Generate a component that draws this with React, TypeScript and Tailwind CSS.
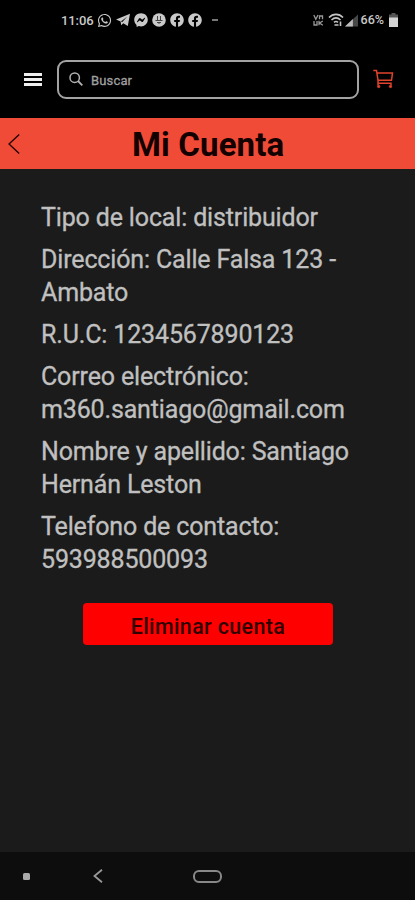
import React from "react";
import { FaWhatsapp, FaFacebookMessenger, FaFacebook } from "react-icons/fa";

const details: string[][] = [
  ["Tipo de local: distribuidor"],
  ["Dirección: Calle Falsa 123 -", "Ambato"],
  ["R.U.C: 1234567890123"],
  ["Correo electrónico:", "m360.santiago@gmail.com"],
  ["Nombre y apellido: Santiago", "Hernán Leston"],
  ["Telefono de contacto:", "593988500093"],
];

function StatusBar() {
  return (
    <div className="flex h-10 items-center pl-[61px] pr-[17px] text-[#c9c9c9]">
      <span className="w-[36px] whitespace-nowrap text-[13px] font-medium leading-none tracking-[-0.1px]">11:06</span>
      <div className="flex items-center gap-[4px]">
        <FaWhatsapp size={15} />
        <svg width="14" height="14" viewBox="0 0 14 14" fill="#c9c9c9">
          <path d="M0 6.600L14 .8 11.800 13 7.300 10.200 5.200 12.200 4.600 8.600z" />
          <path d="M4.800 8.400L11 3.800 6.300 9.300z" fill="#222" />
        </svg>
        <FaFacebookMessenger size={14} />
        <svg width="14" height="14" viewBox="0 0 14 14">
          <circle cx="7" cy="7" r="6.8" fill="#c9c9c9" />
          <path d="M5.500 3v4M8.500 3v4M3.500 7.500h7M5 9.500h4M7 9v2" stroke="#444" strokeWidth="1" />
        </svg>
        <FaFacebook size={14} />
        <FaFacebook size={14} />
      </div>
      <span className="ml-[10px] h-[1.5px] w-[6px] bg-[#777]" />
      <div className="ml-auto flex items-center">
        <svg width="11" height="12" viewBox="0 0 11 12" fill="none" stroke="#999" strokeWidth="1.3">
          <path d="M.8 1l2 4.200L5 1M6.500 5.200V2h3v3.200M1 7v4h3V7M6 6.800v4.500M9.800 7L6.600 9l3.200 2.200" />
        </svg>
        <svg className="ml-[4px]" width="16" height="14" viewBox="0 0 16 14" fill="none" stroke="#c4c4c4" strokeWidth="1.6">
          <path d="M1 4.500C5 .3 11 .3 15 4.500M3.500 7c2.700-2.500 6.300-2.500 9 0M6 9.300c1.300-1 2.700-1 4 0" />
          <path d="M6.500 12h4M12.500 8.500v4.500" />
        </svg>
        <svg className="ml-[1px]" width="13" height="13" viewBox="0 0 14 13">
          <path d="M0 13L14 0v13z" fill="#484848" />
          <path d="M0 13L8.500 5v8z" fill="#bbb" />
        </svg>
        <span className="ml-[3px] mt-[1px] whitespace-nowrap text-[12.5px] font-medium leading-none">66%</span>
        <svg className="ml-[5px]" width="9" height="14" viewBox="0 0 9 14">
          <path d="M2.500 0h4v1.500H9V5H0V1.500h2.500z" fill="#555" />
          <path d="M0 4.500h9V14H0z" fill="#d4d4d4" />
        </svg>
      </div>
    </div>
  );
}

function SearchHeader() {
  return (
    <div className="flex h-[78px] items-center pl-[24px]">
      <div className="mt-[1px] flex w-[18px] flex-col gap-[2px]">
        <span className="h-[3px] bg-[#eee]" />
        <span className="h-[3px] bg-[#eee]" />
        <span className="h-[3px] bg-[#eee]" />
      </div>
      <div className="ml-[15px] flex h-[39px] w-[302px] items-center rounded-[9px] border-2 border-[#a3a3a3] pl-[10px]">
        <svg width="14" height="14" viewBox="0 0 14 14" fill="none" stroke="#b0b0b0" strokeWidth="1.5">
          <circle cx="5.700" cy="5.700" r="4.700" />
          <path d="M9 9l4.300 4.300" strokeWidth="1.8" />
        </svg>
        <span className="ml-[8px] mt-[2px] text-[13px] leading-none tracking-[0.15px] text-[#a0a0a0] [-webkit-text-stroke:0.3px_#a0a0a0]">Buscar</span>
      </div>
      <svg className="ml-[14px]" width="22" height="20" viewBox="0 0 22 20" fill="none" stroke="#e2432c" strokeWidth="1.5">
        <path d="M.3 1.500h3.200l1.500 9.800V16.500M4.200 4h15.300l-1 7.300H5M5 14.300h13V16.500" />
        <circle cx="5.700" cy="17.500" r="1.200" fill="#e2432c" strokeWidth=".8" />
        <circle cx="17.500" cy="17.500" r="1.200" fill="#e2432c" strokeWidth=".8" />
      </svg>
    </div>
  );
}

export default function App() {
  return (
    <div className="flex h-[900px] w-[415px] flex-col overflow-hidden bg-[#1b1b1b] font-['Roboto',sans-serif]">
      <header className="bg-black">
        <StatusBar />
        <SearchHeader />
      </header>
      <div className="flex h-[51px] items-center bg-[#f04b37] pl-[8px]">
        <svg width="12" height="20" viewBox="0 0 12 20" fill="none" stroke="#260500" strokeWidth="1.4">
          <path d="M11.200.5L1 10l10.200 9.500" />
        </svg>
        <h1 className="ml-[112px] mt-[1px] whitespace-nowrap text-[33px] font-bold leading-none tracking-[0.15px] text-[#130000]">Mi Cuenta</h1>
      </div>
      <main className="flex flex-1 flex-col">
        <div className="mt-[32.400px] flex flex-col gap-[8.2px] pl-[41px] text-[25px] leading-[33.4px] tracking-[-0.15px] text-[#c0c0c0] [-webkit-text-stroke:0.3px_#c0c0c0]">
          {details.map((lines) => (
            <div key={lines[0]}>
              {lines.map((line) => (
                <p key={line} className="whitespace-nowrap">{line}</p>
              ))}
            </div>
          ))}
        </div>
        <button className="ml-[83px] mt-[27px] h-[42px] w-[250px] rounded-[4px] bg-[#fe0000] pt-[4px] text-[21.5px] font-medium leading-none tracking-[0.35px] text-[#300000]">
          Eliminar cuenta
        </button>
      </main>
      <nav className="flex h-[48px] items-center bg-[#0d0d0d] pl-[23px]">
        <span className="h-[7px] w-[7px] rounded-[1.5px] bg-[#aaa]" />
        <svg className="ml-[63px]" width="10" height="14" viewBox="0 0 10 14" fill="none" stroke="#999" strokeWidth="1.8">
          <path d="M9 .8L1.500 7 9 13.200" />
        </svg>
        <span className="ml-[90px] h-[13px] w-[29px] rounded-[6px] border-2 border-[#888]" />
      </nav>
    </div>
  );
}
